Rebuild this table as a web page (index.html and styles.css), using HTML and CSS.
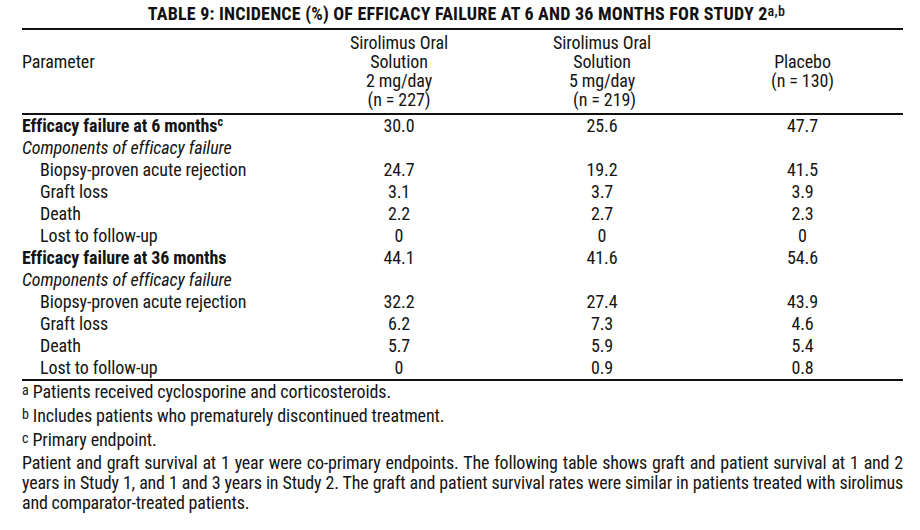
FILE: index.html
```html
<!DOCTYPE html>
<html>
<head>
<meta charset="utf-8">
<link rel="stylesheet" href="styles.css">
</head>
<body>
<div class="page">
  <h1 class="title">TABLE 9: INCIDENCE (%) OF EFFICACY FAILURE AT 6 AND 36 MONTHS FOR STUDY 2<sup class="tsup">a,b</sup></h1>
  <div class="table">
    <div class="head">
      <div class="hparam">Parameter</div>
      <div class="hcol">Sirolimus Oral<br>Solution<br>2 mg/day<br>(n = 227)</div>
      <div class="hcol">Sirolimus Oral<br>Solution<br>5 mg/day<br><span class="shift">(n = 219)</span></div>
      <div class="hcol hmid">Placebo<br>(n = 130)</div>
    </div>
    <div class="body">
      <div class="row"><div class="lab bold">Efficacy failure at 6 months<sup class="csup">c</sup></div><div class="v">30.0</div><div class="v">25.6</div><div class="v">47.7</div></div>
      <div class="row"><div class="lab ital">Components of efficacy failure</div><div class="v"></div><div class="v"></div><div class="v"></div></div>
      <div class="row"><div class="lab ind">Biopsy-proven acute rejection</div><div class="v">24.7</div><div class="v">19.2</div><div class="v">41.5</div></div>
      <div class="row"><div class="lab ind">Graft loss</div><div class="v">3.1</div><div class="v">3.7</div><div class="v">3.9</div></div>
      <div class="row"><div class="lab ind">Death</div><div class="v">2.2</div><div class="v">2.7</div><div class="v">2.3</div></div>
      <div class="row"><div class="lab ind">Lost to follow-up</div><div class="v">0</div><div class="v">0</div><div class="v">0</div></div>
      <div class="row"><div class="lab bold">Efficacy failure at 36 months</div><div class="v">44.1</div><div class="v">41.6</div><div class="v">54.6</div></div>
      <div class="row"><div class="lab ital">Components of efficacy failure</div><div class="v"></div><div class="v"></div><div class="v"></div></div>
      <div class="row"><div class="lab ind">Biopsy-proven acute rejection</div><div class="v">32.2</div><div class="v">27.4</div><div class="v">43.9</div></div>
      <div class="row"><div class="lab ind">Graft loss</div><div class="v">6.2</div><div class="v">7.3</div><div class="v">4.6</div></div>
      <div class="row"><div class="lab ind">Death</div><div class="v">5.7</div><div class="v">5.9</div><div class="v">5.4</div></div>
      <div class="row"><div class="lab ind">Lost to follow-up</div><div class="v">0</div><div class="v">0.9</div><div class="v">0.8</div></div>
    </div>
  </div>
  <div class="notes">
    <p class="fn"><span class="mark">a</span> Patients received cyclosporine and corticosteroids.</p>
    <p class="fn"><span class="mark">b</span> Includes patients who prematurely discontinued treatment.</p>
    <p class="fn"><span class="mark">c</span> Primary endpoint.</p>
    <p class="para">Patient and graft survival at 1 year were co-primary endpoints. The following table shows graft and patient survival at 1 and 2 years in Study 1, and 1 and 3 years in Study 2. The graft and patient survival rates were similar in patients treated with sirolimus and comparator-treated patients.</p>
  </div>
</div>
</body>
</html>
```
FILE: styles.css
```css
* { box-sizing: border-box; }
html, body { margin: 0; padding: 0; background: #fff; }
body {
  font-family: "Roboto Condensed", "Liberation Sans", Arial, sans-serif;
  font-size: 18px;
  color: #141414;
  letter-spacing: -0.1px;
}
.page {
  width: 920px;
  padding: 0 17px 0 22px;
}
.title {
  margin: 0;
  font-size: 18px;
  font-weight: bold;
  text-align: center;
  line-height: 20px;
  padding-top: 4px;
  padding-left: 8px;
  height: 28px;
  letter-spacing: 0.2px;
  color: #111;
}
.tsup {
  font-size: 14px;
  font-weight: 500;
  vertical-align: 4px;
  line-height: 0;
  letter-spacing: 0.3px;
}
.table {
  border-top: 2px solid #111;
  border-bottom: 2px solid #111;
}
.head {
  display: grid;
  grid-template-columns: 274px 206px 200px 201px;
  line-height: 19px;
  padding: 3px 0 4px;
  border-bottom: 2px solid #111;
}
.hparam {
  padding-top: 19px;
}
.hcol {
  text-align: center;
}
.hmid {
  align-self: center;
}
.shift { padding-left: 5px; }
.row {
  display: grid;
  grid-template-columns: 274px 206px 200px 201px;
  line-height: 22px;
  height: 22px;
}
.v { text-align: center; }
.lab { white-space: nowrap; }
.bold { font-weight: bold; }
.ital { font-style: italic; }
.ind { padding-left: 18px; }
.csup {
  font-size: 12px;
  vertical-align: 6px;
  line-height: 0;
  font-weight: bold;
}
.notes { padding-top: 0; }
.fn {
  margin: 0 0 2px;
  line-height: 22px;
}
.mark {
  font-size: 14px;
  vertical-align: 3px;
  line-height: 0;
}
.para {
  margin: 2px 0 0;
  line-height: 20px;
  text-align: justify;
  letter-spacing: -0.2px;
}
```
